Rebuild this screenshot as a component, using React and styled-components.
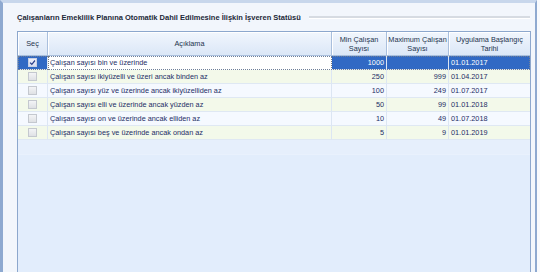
import React from "react";
import styled, { createGlobalStyle } from "styled-components";

const Global = createGlobalStyle`
  html, body { margin: 0; padding: 0; background: #f7f9fc; }
  #root { width: 540px; height: 272px; overflow: hidden; }
`;

const Page = styled.div`
  width: 540px;
  height: 272px;
  display: flex;
  background: #f8fafd;
  font-family: "Liberation Sans", Arial, sans-serif;
`;

const Window = styled.div`
  width: 537px;
  height: 272px;
  box-sizing: border-box;
  border-left: 3px solid #8ea9d0;
  border-right: 2px solid #8ea9d0;
  border-top: 3px solid #c8d7ec;
  background: #f2f6fc;
  display: flex;
  flex-direction: column;
  padding: 0 0 0 14px;
`;

const TitleRow = styled.div`
  height: 25px;
  display: flex;
  align-items: center;
  padding-top: 3px;
  margin-right: 5px;
  box-sizing: border-box;
  gap: 8px;
`;

const Title = styled.span`
  font-size: 7.5px;
  font-weight: bold;
  color: #1c2838;
  white-space: nowrap;
`;

const TitleLine = styled.div`
  flex: 1;
  height: 2px;
  background: #d6dbe2;
  border-bottom: 1px solid #ffffff;
`;

const Grid = styled.div`
  margin-top: 3px;
  width: 514px;
  flex: 1;
  box-sizing: border-box;
  border: 1px solid #8ca7cd;
  border-bottom: none;
  background: #e2edfc;
  display: flex;
  flex-direction: column;
`;

const cols = "30px 284px 55px 62px 81px";

const HeaderRow = styled.div`
  display: grid;
  grid-template-columns: ${cols};
  height: 24px;
`;

const HeaderCell = styled.div`
  display: flex;
  align-items: center;
  justify-content: center;
  text-align: center;
  font-size: 7.3px;
  line-height: 9px;
  color: #23344d;
  background: linear-gradient(#f1f6fd, #dbe7f7);
  border-right: 1px solid #a9bfdd;
  border-bottom: 1px solid #a9bfdd;
  box-shadow: inset 1px 1px 0 #ffffff;
  &:last-child { border-right: none; }
`;

const Row = styled.div`
  display: grid;
  grid-template-columns: ${cols};
  height: 14px;
  background: ${(p) => (p.$alt ? "#f3f9ea" : "#f5f9ff")};
  outline: ${(p) => (p.$selected ? "1px dotted #6f7f99" : "none")};
  outline-offset: -1px;
`;

const Cell = styled.div`
  box-sizing: border-box;
  height: 14px;
  line-height: 13px;
  font-size: 7.3px;
  color: ${(p) => (p.$sel ? "#ffffff" : "#1d2e66")};
  background: ${(p) => (p.$sel ? "#3169c4" : "transparent")};
  border-right: 1px solid #dce6f3;
  border-bottom: 1px solid #dfe8f3;
  padding: 0 2px;
  text-align: ${(p) => p.$align || "left"};
  white-space: nowrap;
  overflow: hidden;
  &:last-child { border-right: none; }
`;

const FocusCell = styled(Cell)`
  background: #ffffff;
  color: #1d2e66;
  border: 1px dotted #7a7a7a;
  line-height: 11px;
  padding: 0 1px;
`;

const CheckCell = styled(Cell)`
  display: flex;
  align-items: center;
  justify-content: center;
  padding: 0;
`;

const Box = styled.div`
  width: 9px;
  height: 9px;
  box-sizing: border-box;
  border: 1px solid ${(p) => (p.$checked ? "#c8d0e4" : "#c4c8cf")};
  background: ${(p) =>
    p.$checked ? "linear-gradient(#eef0fb, #d8dcf2)" : "linear-gradient(#f3f4f6, #dfe1e5)"};
  display: flex;
  align-items: center;
  justify-content: center;
`;

const Filler = styled.div`
  height: 14px;
  background: #e6effc;
  border-bottom: 1px solid #e9f1fd;
`;

const rows = [
  { text: "Çalışan sayısı bin ve üzerinde", min: "1000", max: "", date: "01.01.2017", checked: true },
  { text: "Çalışan sayısı ikiyüzelli ve üzeri ancak binden az", min: "250", max: "999", date: "01.04.2017" },
  { text: "Çalışan sayısı yüz ve üzerinde ancak ikiyüzelliden az", min: "100", max: "249", date: "01.07.2017" },
  { text: "Çalışan sayısı elli ve üzerinde ancak yüzden az", min: "50", max: "99", date: "01.01.2018" },
  { text: "Çalışan sayısı on ve üzerinde ancak elliden az", min: "10", max: "49", date: "01.07.2018" },
  { text: "Çalışan sayısı beş ve üzerinde ancak ondan az", min: "5", max: "9", date: "01.01.2019" },
];

const Check = () => (
  <svg width="7" height="7" viewBox="0 0 7 7">
    <path d="M1 3.6 L2.8 5.3 L6 1.5" fill="none" stroke="#2a3f8a" strokeWidth="1.2" />
  </svg>
);

export default function App() {
  return (
    <Page>
      <Global />
      <Window>
        <TitleRow>
          <Title>Çalışanların Emeklilik Planına Otomatik Dahil Edilmesine İlişkin İşveren Statüsü</Title>
          <TitleLine />
        </TitleRow>
        <Grid>
          <HeaderRow>
            <HeaderCell>Seç</HeaderCell>
            <HeaderCell>Açıklama</HeaderCell>
            <HeaderCell>Min Çalışan<br />Sayısı</HeaderCell>
            <HeaderCell>Maximum Çalışan<br />Sayısı</HeaderCell>
            <HeaderCell>Uygulama Başlangıç<br />Tarihi</HeaderCell>
          </HeaderRow>
          {rows.map((r, i) => {
            const sel = !!r.checked;
            return (
              <Row key={i} $alt={i % 2 === 1} $selected={sel}>
                <CheckCell $sel={sel}>
                  <Box $checked={sel}>{sel && <Check />}</Box>
                </CheckCell>
                {sel ? <FocusCell>{r.text}</FocusCell> : <Cell>{r.text}</Cell>}
                <Cell $sel={sel} $align="right">{r.min}</Cell>
                <Cell $sel={sel} $align="right">{r.max}</Cell>
                <Cell $sel={sel}>{r.date}</Cell>
              </Row>
            );
          })}
          <Filler />
        </Grid>
      </Window>
    </Page>
  );
}
